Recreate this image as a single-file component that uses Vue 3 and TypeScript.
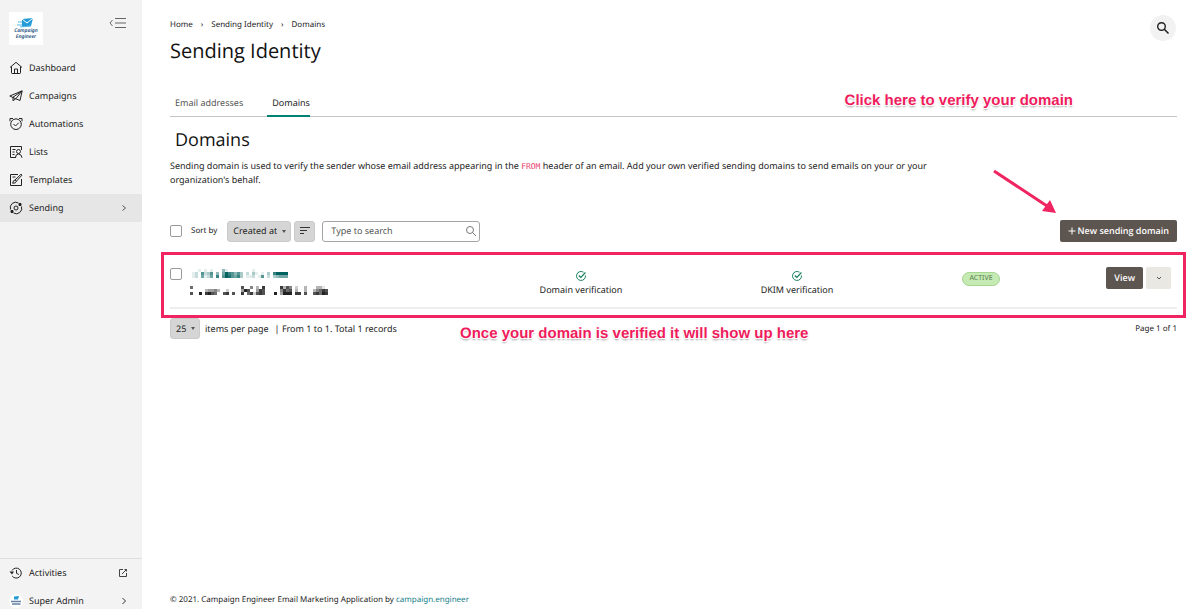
<script setup lang="ts">
import { ref } from 'vue'

interface NavItem {
  label: string
  icon: string
  active?: boolean
}

const nav: NavItem[] = [
  { label: 'Dashboard', icon: 'home' },
  { label: 'Campaigns', icon: 'plane' },
  { label: 'Automations', icon: 'clock' },
  { label: 'Lists', icon: 'list' },
  { label: 'Templates', icon: 'template' },
  { label: 'Sending', icon: 'sending', active: true },
]

const search = ref('')
const sortField = ref('Created at')
const pageSize = ref('25')

interface Cell {
  x: number
  y: number
  o: number
}

// Each digit is the strength of one masked block, 0 is empty.
function toCells(rows: string[]): Cell[] {
  return rows.flatMap((row, y) =>
    [...row].map((c, x) => ({ x: x * 3, y: y * 3, o: Number(c) / 9 })).filter((c) => c.o > 0),
  )
}

const maskedName = toCells([
  '00101010004100000000100000000000',
  '12062360405976463020310103079999',
  '12051250706986573011201602034555',
])
const maskedDate = toCells([
  '6000000000000000070050308000008375020030003310',
  '0000034453002000049700487000005867030030035687',
  '7009089760078070080682787000904999088070078698',
])
</script>

<template>
  <div class="app">
    <aside class="sidebar">
      <div class="brand">
        <a class="logo" href="#" aria-label="Campaign Engineer">
          <svg width="18" height="10" viewBox="0 0 18 10" aria-hidden="true">
            <path d="M5 1 16 0l-2 8-9 1z" fill="#249bd7" />
            <path d="m5 1 5 4 6-5" fill="none" stroke="#fff" stroke-width="1" />
            <path d="M1 4h4M0 7h5M3 9l11-1" stroke="#55b9e8" stroke-width="1" />
          </svg>
          <span>Campaign<br />Engineer</span>
        </a>
        <button class="collapse" type="button" aria-label="Collapse menu">
          <svg width="18" height="12" viewBox="0 0 18 12" fill="none" stroke="#666">
            <path d="M3.500 3 1 6l2.500 3" />
            <path d="M6 1.500h11M6 6h11M6 10.500h11" />
          </svg>
        </button>
      </div>
      <nav class="nav">
        <a v-for="item in nav" :key="item.label" href="#" class="nav-item" :class="{ active: item.active }">
          <svg class="icon" width="14" height="14" viewBox="0 0 14 14" fill="none" stroke="#222" aria-hidden="true">
            <template v-if="item.icon === 'home'">
              <path d="M1 6.500 7 1.300l6 5.200M2.500 5.500v6.300q0 .7.700.7h7.600q.7 0 .7-.7V5.500" />
              <path d="M5.500 12.300V8h3v4.300" />
            </template>
            <template v-else-if="item.icon === 'plane'">
              <path d="M.8 7 13.200 1.800l-2.200 9.700-4.200-1.700zM4 8.200l9-6.200-6.200 7.800M4 8.200v3.600l2.700-2" stroke-linejoin="round" />
            </template>
            <template v-else-if="item.icon === 'clock'">
              <circle cx="7" cy="7.200" r="5.300" />
              <path d="m4.500 7 2 2L9.800 5.700M1 4.300V1.500h3M13 4.300V1.500h-3" />
            </template>
            <template v-else-if="item.icon === 'list'">
              <path d="M12.500 5V1.500h-11v11h5.500" />
              <path d="M3.500 4.500h3M3.500 7h2M3.500 9.500h2" />
              <circle cx="9.500" cy="6.500" r="2" />
              <path d="M6.500 12.800q0-3.800 3-3.800t3.500 3.800" />
            </template>
            <template v-else-if="item.icon === 'template'">
              <path d="M9 1.500H1.500v11h11V6M3.500 4h3" />
              <path d="m6 7 6-5.800 1 .9-5.500 6zM6 7q-2 0-2.300 3.300Q7 10.500 7.500 8.100" />
            </template>
            <template v-else>
              <circle cx="7" cy="7" r="2" />
              <path d="M1.500 8.500A5.500 5.500 0 0 1 9.500 2M12.500 5.500A5.500 5.500 0 0 1 4.500 12" />
              <path d="M10 2.500h2v2h-2zM2 9.500h2v2H2z" fill="#222" />
            </template>
          </svg>
          <span>{{ item.label }}</span>
          <svg v-if="item.active" class="trail" width="8" height="8" viewBox="0 0 8 8" fill="none" stroke="#555">
            <path d="m2.500 1.500 3 2.500-3 2.500" />
          </svg>
        </a>
      </nav>
      <div class="account">
        <a href="#" class="account-item">
          <svg class="icon" width="14" height="14" viewBox="0 0 14 14" fill="none" stroke="#222" aria-hidden="true">
            <path d="M3 4.500a5 5 0 1 1 .2 5.500M7.500 4v3.300L9.800 8.500" />
            <path d="M.5 5.500h4.500L3 8.500z" fill="#222" stroke="none" />
          </svg>
          <span>Activities</span>
          <svg class="trail" width="10" height="10" viewBox="0 0 10 10" fill="none" stroke="#444">
            <path d="M5 1.500H1.500v7h7V5M6.500 1.500h2v2M8.500 1.500 4 6" />
          </svg>
        </a>
        <a href="#" class="account-item">
          <svg class="icon" width="14" height="14" viewBox="0 0 14 14" aria-hidden="true">
            <circle cx="7" cy="7" r="7" fill="#fff" />
            <path d="m5 2.500 5-.5-1 3.500H5z" fill="#249bd7" />
            <path d="M2 7.500h10M3 10h8.500" stroke="#6681a5" stroke-width="1.500" />
          </svg>
          <span>Super Admin</span>
          <svg class="trail" width="8" height="8" viewBox="0 0 8 8" fill="none" stroke="#333">
            <path d="m2.500 1 3 3-3 3" />
          </svg>
        </a>
      </div>
    </aside>

    <main class="main">
      <header class="head">
        <div>
          <nav class="crumbs" aria-label="Breadcrumb">
            <a href="#">Home</a><span>›</span><a href="#">Sending Identity</a><span>›</span><a href="#">Domains</a>
          </nav>
          <h1>Sending Identity</h1>
        </div>
        <button class="search-btn" type="button" aria-label="Search">
          <svg width="14" height="14" viewBox="0 0 14 14" fill="none" stroke="#222">
            <circle cx="5.500" cy="5.500" r="3.800" stroke-width="1.400" />
            <path d="m8.300 8.300 4.200 4.200" stroke-width="1.600" />
          </svg>
        </button>
      </header>

      <nav class="tabs">
        <a href="#">Email addresses</a>
        <a href="#" class="current">Domains</a>
      </nav>

      <h2>Domains</h2>
      <p class="intro">
        Sending domain is used to verify the sender whose email address appearing in the <code>FROM</code> header of an
        email. Add your own verified sending domains to send emails on your or your organization's behalf.
      </p>

      <div class="toolbar">
        <input id="all" type="checkbox" class="check" aria-label="Select all" />
        <label class="sort-label" for="sort">Sort by</label>
        <span class="select">
          <select id="sort" v-model="sortField">
            <option>Created at</option>
          </select>
        </span>
        <button class="order" type="button" aria-label="Sort direction">
          <svg width="12" height="10" viewBox="0 0 12 10" stroke="#333"><path d="M1 1.500h10M1 4.500h7M1 7.500h4" /></svg>
        </button>
        <span class="field">
          <input v-model="search" type="text" placeholder="Type to search" aria-label="Type to search" />
          <svg width="12" height="12" viewBox="0 0 12 12" fill="none" stroke="#777">
            <circle cx="5" cy="5" r="3.500" />
            <path d="m7.500 7.500 3.500 3.500" />
          </svg>
        </span>
        <button class="dark new" type="button">
          <svg width="8" height="8" viewBox="0 0 8 8" stroke="#fff"><path d="M4 .5v7M.5 4h7" /></svg>
          New sending domain
        </button>
        <svg class="arrow" width="64" height="46" viewBox="0 0 64 46" aria-hidden="true">
          <path d="M1 2 54 37" stroke="#ef2460" stroke-width="3" />
          <path d="m63 44-14-2 8-11z" fill="#ef2460" />
        </svg>
        <strong class="note note-top">Click here to verify your domain</strong>
      </div>

      <section class="row">
        <div class="identity">
          <input type="checkbox" class="check" aria-label="Select domain" />
          <div class="masks">
            <svg class="mask-name" width="96" height="9" viewBox="0 0 96 9" fill="#00625f" aria-hidden="true">
              <rect v-for="(c, i) in maskedName" :key="i" :x="c.x" :y="c.y" width="3" height="3" :opacity="c.o" />
            </svg>
            <svg width="138" height="9" viewBox="0 0 138 9" fill="#222" aria-hidden="true">
              <rect v-for="(c, i) in maskedDate" :key="i" :x="c.x" :y="c.y" width="3" height="3" :opacity="c.o" />
            </svg>
          </div>
        </div>
        <div v-for="label in ['Domain verification', 'DKIM verification']" :key="label" class="verify">
          <svg width="12" height="12" viewBox="0 0 12 12" fill="none" stroke="#17805f" aria-hidden="true">
            <path d="M10.500 5.500a4.500 4.500 0 1 1-2-3.300" />
            <path d="m3.800 5.500 2 2 4.700-5" stroke-width="1.200" />
          </svg>
          <span>{{ label }}</span>
        </div>
        <div class="status"><span class="badge">ACTIVE</span></div>
        <div class="actions">
          <button class="dark view" type="button">View</button>
          <button class="more" type="button" aria-label="More actions">
            <svg width="6" height="6" viewBox="0 0 6 6" fill="none" stroke="#555"><path d="m1 2 2 2 2-2" /></svg>
          </button>
        </div>
        <div class="frame"></div>
      </section>

      <div class="pager">
        <span class="select">
          <select id="size" v-model="pageSize">
            <option>25</option>
          </select>
        </span>
        <label for="size">items per page</label>
        <span class="total">| From 1 to 1. Total 1 records</span>
        <span class="page">Page 1 of 1</span>
        <strong class="note note-bottom">Once your domain is verified it will show up here</strong>
      </div>

      <footer class="foot">
        © 2021. Campaign Engineer Email Marketing Application by <a href="#">campaign.engineer</a>
      </footer>
    </main>
  </div>
</template>

<style>
body {
  margin: 0;
  background: #fff;
}
</style>

<style scoped>
* {
  box-sizing: border-box;
}
.app {
  display: flex;
  height: 100vh;
  overflow: hidden;
  font-family: 'Noto Sans', 'Open Sans', sans-serif;
  font-size: 9px;
  line-height: 14px;
  color: #222;
  text-rendering: geometricPrecision;
}
a {
  color: inherit;
  text-decoration: none;
}
svg {
  display: block;
  flex: none;
}
button,
input,
select {
  font: inherit;
  color: inherit;
  text-rendering: inherit;
  margin: 0;
  border: 0;
  padding: 0;
}
.sidebar {
  flex: none;
  width: 142px;
  display: flex;
  flex-direction: column;
  background: #f3f3f3;
}
.brand {
  display: flex;
  justify-content: space-between;
  align-items: flex-start;
  padding: 12px 15px 9px 9px;
}
.logo {
  width: 34px;
  height: 33px;
  display: flex;
  flex-direction: column;
  align-items: center;
  justify-content: center;
  background: #fff;
  color: #174a7c;
  font-size: 5px;
  line-height: 6px;
  font-weight: 600;
  font-style: italic;
  text-align: center;
}
.collapse {
  margin-top: 5px;
  background: none;
}
.nav-item,
.account-item {
  display: flex;
  align-items: center;
  height: 28px;
  padding: 0 14px 0 9px;
}
.icon {
  margin-right: 6px;
}
.trail {
  margin-left: auto;
}
.nav-item.active {
  background: #e6e6e6;
}
.account {
  margin-top: auto;
  border-top: 1px solid #dedede;
  margin-bottom: -6px;
}
.main {
  flex: 1;
  min-width: 0;
  display: flex;
  flex-direction: column;
  padding: 15px 23px 2px 28px;
}
.head {
  display: flex;
  justify-content: space-between;
  align-items: flex-start;
}
.crumbs {
  display: flex;
  gap: 8px;
  font-size: 8px;
  line-height: 20px;
}
h1,
h2 {
  font-family: 'Open Sans', 'Noto Sans', sans-serif;
  font-weight: 400;
  color: #111;
}
h1 {
  margin: 2px 0 0;
  font-size: 20px;
  line-height: 28px;
}
.search-btn {
  width: 26px;
  height: 26px;
  margin-right: 1px;
  border-radius: 50%;
  display: grid;
  place-items: center;
  background: #f2f2f2;
}
.tabs {
  display: flex;
  gap: 24px;
  margin-top: 28px;
  border-bottom: 1px solid #c4c4c4;
}
.tabs a {
  padding: 3px 0 5px 5px;
  border-bottom: 2px solid transparent;
  margin-bottom: -1px;
  color: #555;
}
.tabs .current {
  border-color: #008272;
  color: #222;
}
h2 {
  margin: 10px 5px 0;
  font-size: 18px;
  line-height: 26px;
}
.intro {
  margin: 6px 0 0;
  max-width: 790px;
}
code {
  font-family: 'DejaVu Sans Mono', monospace;
  font-size: 8px;
  line-height: 8px;
  color: #e83e6c;
}
.toolbar {
  position: relative;
  display: flex;
  align-items: center;
  margin-top: 33px;
}
.check {
  appearance: none;
  flex: none;
  width: 12px;
  height: 12px;
  border: 1px solid #999;
  border-radius: 2px;
  background: #fff;
}
.sort-label {
  margin: 0 10px 0 9px;
  font-size: 8px;
}
.select {
  position: relative;
  display: flex;
}
.select::after {
  content: '';
  position: absolute;
  right: 5px;
  top: 9px;
  border: 2px solid transparent;
  border-top: 3px solid #555;
}
.select select {
  appearance: none;
  height: 21px;
  padding: 0 12px 0 5px;
  border: 1px solid #cbcbcb;
  border-radius: 3px;
  background: #d5d5d5;
}
.toolbar .select select {
  padding-right: 13px;
}
.order {
  width: 21px;
  height: 21px;
  margin: 0 7px 0 3px;
  display: grid;
  place-items: center;
  border: 1px solid #cbcbcb;
  border-radius: 3px;
  background: #d5d5d5;
}
.field {
  display: flex;
  align-items: center;
  width: 158px;
  height: 21px;
  padding: 0 2px 0 8px;
  border: 1px solid #a5a5a5;
  border-radius: 3px;
}
.field input {
  flex: 1;
  min-width: 0;
  background: none;
  outline: 0;
}
.field input::placeholder {
  color: #555;
  opacity: 1;
}
.dark {
  height: 22px;
  display: flex;
  align-items: center;
  justify-content: center;
  gap: 2px;
  padding: 0 8px;
  border-radius: 2px;
  background: #5d554f;
  color: #fff;
  font-family: 'Open Sans', 'Noto Sans', sans-serif;
  font-weight: 600;
}
.new {
  margin-left: auto;
}
.arrow {
  position: absolute;
  right: 120px;
  bottom: 27px;
}
.note {
  position: absolute;
  white-space: nowrap;
  font-family: 'Liberation Sans', Arial, sans-serif;
  font-size: 15px;
  line-height: 18px;
  color: #ef1b5c;
  text-shadow: 0 0 1px #fff, 1px 1px 0 #fff, -1px 1px 0 #fff, 0 2px 2px #999;
}
.note-top {
  right: 104px;
  bottom: 132px;
}
.note-bottom {
  left: 290px;
  top: 7px;
}
.row {
  position: relative;
  display: grid;
  grid-template-columns: 303fr 216fr 216fr 152fr 120fr;
  align-items: start;
  margin-top: 10px;
  padding: 15px 0 10px;
  border-bottom: 2px solid #eee;
}
.identity {
  display: flex;
  gap: 8px;
  padding-top: 1px;
}
.masks {
  display: grid;
  gap: 8px;
  padding-top: 1px;
}
.mask-name {
  margin-left: 2px;
}
.verify {
  display: flex;
  flex-direction: column;
  align-items: center;
  gap: 1px;
  padding-top: 3px;
}
.status {
  display: flex;
  justify-content: center;
  padding-top: 5px;
}
.badge {
  padding: 0 6px;
  border: 1px solid #a5d591;
  border-radius: 7px;
  background: #c5eab4;
  color: #577c4a;
  font-size: 7px;
  line-height: 12px;
}
.actions {
  display: flex;
  justify-content: flex-end;
  gap: 3px;
  padding-right: 6px;
}
.more {
  width: 25px;
  height: 22px;
  display: grid;
  place-items: center;
  border-radius: 2px;
  background: #eae8e2;
}
.frame {
  position: absolute;
  inset: 0 -9px -11px -9px;
  border: 3px solid #ef2460;
  pointer-events: none;
}
.pager {
  position: relative;
  display: flex;
  align-items: center;
  margin-top: 9px;
}
.pager label {
  margin: 0 6px 0 5px;
}
.page {
  margin-left: auto;
  font-size: 8px;
}
.foot {
  margin-top: auto;
  font-size: 8px;
}
.foot a {
  color: #16818a;
}
</style>
